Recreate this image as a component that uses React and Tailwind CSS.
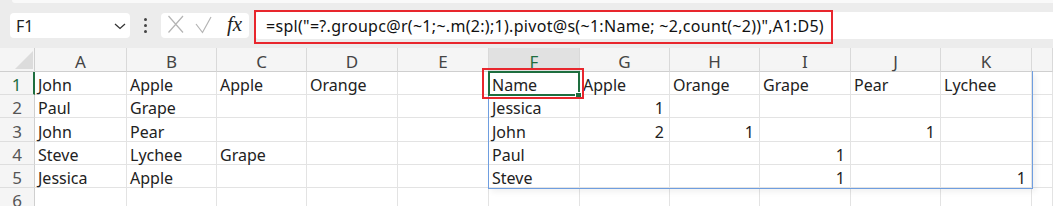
import React from "react";

const COLS = ["A", "B", "C", "D", "E", "F", "G", "H", "I", "J", "K", ""];
const ROWH = ["h-[23px]", "h-[23px]", "h-[24px]", "h-[23px]", "h-[23px]", "h-[23px]"];

const DATA = [
  ["John", "Apple", "Apple", "Orange", "", "Name", "Apple", "Orange", "Grape", "Pear", "Lychee", ""],
  ["Paul", "Grape", "", "", "", "Jessica", 1, "", "", "", "", ""],
  ["John", "Pear", "", "", "", "John", 2, 1, "", 1, "", ""],
  ["Steve", "Lychee", "Grape", "", "", "Paul", "", "", 1, "", "", ""],
  ["Jessica", "Apple", "", "", "", "Steve", "", "", 1, "", 1, ""],
  ["", "", "", "", "", "", "", "", "", "", "", ""],
];

const font = { fontFamily: '"Noto Sans", "Liberation Sans", sans-serif' };

export default function App() {
  return (
    <div className="w-[1053px] h-[206px] overflow-hidden bg-white relative" style={font}>
      {/* toolbar */}
      <div className="h-[48px] bg-[#ececec] flex flex-col">
        <div className="h-[3px] ml-[12px] bg-[#f9f9f9] rounded-bl-[4px]" />
        <div className="mt-[9px] h-[27px] flex items-center">
          <div className="ml-[10px] w-[120px] h-[25px] bg-white rounded-[4px] flex items-center justify-between pl-[6px] pr-[3px]">
            <span className="text-[16px] leading-none text-[#222]">F1</span>
            <svg width="14" height="10" viewBox="0 0 14 10">
              <path d="M2 3 L7 7.5 L12 3" fill="none" stroke="#333" strokeWidth="1.3" />
            </svg>
          </div>
          <div className="w-[31px] flex flex-col items-center justify-center gap-[3px]">
            <div className="w-[3px] h-[3px] rounded-full bg-[#444]" />
            <div className="w-[3px] h-[3px] rounded-full bg-[#444]" />
            <div className="w-[3px] h-[3px] rounded-full bg-[#444]" />
          </div>
          <div className="w-[88px] h-[25px] bg-white rounded-[4px] flex items-center">
            <svg width="88" height="25" viewBox="0 0 88 25">
              <path d="M7.5 3 L22 19.5 M22 3 L7.5 19.5" stroke="#b4b4b4" strokeWidth="1.2" fill="none" />
              <path d="M35 11 L41.5 19.5 L50 4" stroke="#b4b4b4" strokeWidth="1.2" fill="none" />
            </svg>
          </div>
          <div
            className="-ml-[22px] w-[20px] text-[21px] italic leading-none text-[#222] mb-[2px]"
            style={{ fontFamily: '"Liberation Serif", serif' }}
          >
            fx
          </div>
          <div className="ml-[8px] flex-1 h-[27px] bg-white rounded-l-[4px] flex items-center pl-[11px]">
            <span className="text-[16px] leading-none text-[#111] tracking-[0.3px] whitespace-pre">
              {'=spl("=?.groupc@r(~1;~.m(2:);1).pivot@s(~1:Name; ~2,count(~2))",A1:D5)'}
            </span>
          </div>
        </div>
      </div>

      {/* grid */}
      <div className="relative">
        <div className="grid grid-cols-[35px_92px_90px_90px_91px_91px_91px_90px_90px_91px_90px_91px_1fr]">
          {/* header row */}
          <div className="h-[24px] bg-[#f5f5f5] border-r border-b border-[#cfcfcf] relative">
            <svg className="absolute left-[14px] top-[3px]" width="19" height="19" viewBox="0 0 19 19">
              <path d="M19 0 L19 18 L1 18 Z" fill="#dcdcdc" />
            </svg>
          </div>
          {COLS.map((c, i) => (
            <div
              key={c + i}
              className={`h-[24px] border-b border-r border-[#d9d9d9] border-b-[#cfcfcf] flex items-end justify-center pb-[1px] text-[17px] leading-none ${
                c === "F" ? "bg-[#e1e1e1] text-[#1e6e3f]" : "bg-[#f5f5f5] text-[#444]"
              }`}
            >
              {c}
            </div>
          ))}
          {DATA.map((row, r) => (
            <React.Fragment key={r}>
              <div
                className={`${ROWH[r]} bg-[#f5f5f5] border-b border-[#dedede] flex items-end justify-center pb-[1px] text-[17px] leading-none ${
                  r === 0 ? "text-[#1e6e3f] border-r-2 border-r-[#1e6e3f]" : "text-[#555] border-r border-r-[#cfcfcf]"
                }`}
              >
                {r + 1}
              </div>
              {row.map((v, c) => (
                <div
                  key={c}
                  className={`${ROWH[r]} border-r border-b border-[#e3e3e3] flex items-end pb-[1px] text-[16px] leading-none text-[#222] whitespace-nowrap overflow-visible ${
                    typeof v === "number" ? "justify-end pr-[5px]" : "justify-start pl-[3px]"
                  }`}
                >
                  {v}
                </div>
              ))}
            </React.Fragment>
          ))}
        </div>

        {/* blue result range */}
        <div className="absolute left-[488px] top-[23px] w-[545px] h-[118px] border border-t-0 border-[#6f9ee0] shadow-[3px_3px_6px_rgba(0,0,0,0.06)]" />
        {/* selection F1 */}
        <div className="absolute left-[488px] top-[23px] w-[92px] h-[25px] border-2 border-[#1e6e3f]" />
        <div className="absolute left-[575px] top-[44px] w-[7px] h-[7px] bg-[#1e6e3f] border border-white" />
        {/* red annotation around F1 */}
        <div className="absolute left-[482px] top-[20px] w-[102px] h-[31px] border-2 border-[#e8262d]" />
      </div>

      {/* red annotation around formula */}
      <div className="absolute left-[254px] top-[10px] w-[579px] h-[34px] border-2 border-[#e8262d]" />
    </div>
  );
}
